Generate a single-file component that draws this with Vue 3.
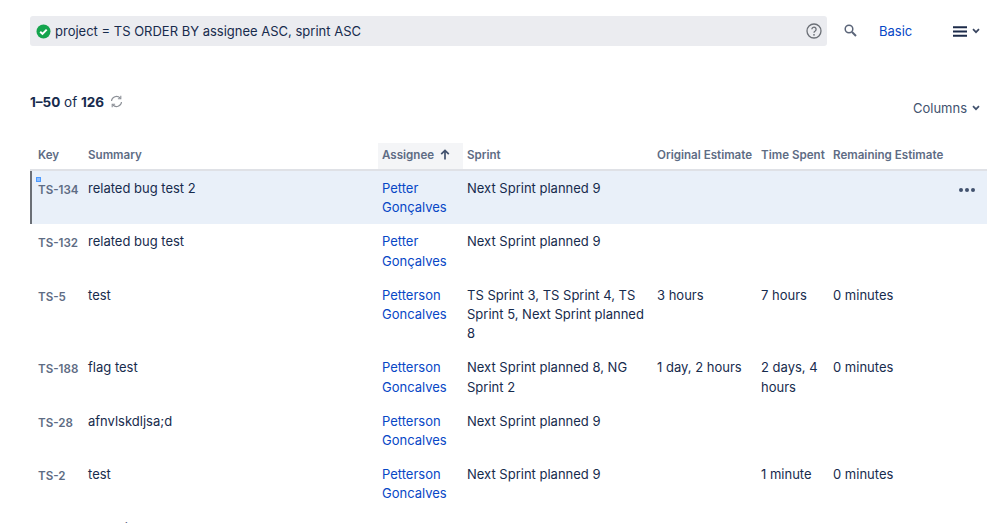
<script setup>
const rows = [
  { key: 'TS-134', summary: 'related bug test 2', assignee: 'Petter Gonçalves', sprint: 'Next Sprint planned 9', orig: '', spent: '', rem: '', active: true },
  { key: 'TS-132', summary: 'related bug test', assignee: 'Petter Gonçalves', sprint: 'Next Sprint planned 9', orig: '', spent: '', rem: '' },
  { key: 'TS-5', summary: 'test', assignee: 'Petterson Goncalves', sprint: 'TS Sprint 3, TS Sprint 4, TS Sprint 5, Next Sprint planned 8', orig: '3 hours', spent: '7 hours', rem: '0 minutes' },
  { key: 'TS-188', summary: 'flag test', assignee: 'Petterson Goncalves', sprint: 'Next Sprint planned 8, NG Sprint 2', orig: '1 day, 2 hours', spent: '2 days, 4 hours', rem: '0 minutes' },
  { key: 'TS-28', summary: 'afnvlskdljsa;d', assignee: 'Petterson Goncalves', sprint: 'Next Sprint planned 9', orig: '', spent: '', rem: '' },
  { key: 'TS-2', summary: 'test', assignee: 'Petterson Goncalves', sprint: 'Next Sprint planned 9', orig: '', spent: '1 minute', rem: '0 minutes' },
  { key: 'TS-33', summary: 'Task title some sample bug', assignee: 'Petterson Goncalves', sprint: '', orig: '', spent: '', rem: '' }
]
</script>

<template>
  <div class="page">
    <div class="search-row">
      <div class="jql">
        <svg class="ok" width="15" height="15" viewBox="0 0 15 15">
          <circle cx="7.5" cy="7.5" r="7" fill="#14a44d" />
          <path d="M4.2 7.7l2.3 2.2 4.2-4.3" fill="none" stroke="#fff" stroke-width="2" />
        </svg>
        <span class="query">project = TS ORDER BY assignee ASC, sprint ASC</span>
        <svg class="help" width="16" height="16" viewBox="0 0 16 16">
          <circle cx="8" cy="8" r="7" fill="none" stroke="#6b6f76" stroke-width="1.3" />
          <path d="M5.900 6.300a2.100 2.100 0 1 1 3.300 1.700c-.8.5-1.200.9-1.200 1.800" fill="none" stroke="#6b6f76" stroke-width="1.3" />
          <circle cx="8" cy="11.800" r=".9" fill="#6b6f76" />
        </svg>
      </div>
      <svg class="mag" width="13" height="13" viewBox="0 0 13 13">
        <circle cx="5" cy="5" r="3.800" fill="none" stroke="#5a6478" stroke-width="1.500" />
        <path d="M8 8l4 4" stroke="#5a6478" stroke-width="2" />
      </svg>
      <a class="basic">Basic</a>
      <div class="menu">
        <svg width="14" height="11" viewBox="0 0 14 11">
          <path d="M0 1.200h14M0 5.500h14M0 9.800h14" stroke="#1c2b4a" stroke-width="2" />
        </svg>
        <svg width="8" height="6" viewBox="0 0 8 6">
          <path d="M1 1.200l3 3 3-3" fill="none" stroke="#3a4660" stroke-width="1.700" />
        </svg>
      </div>
    </div>

    <div class="meta-row">
      <div class="count">
        <span><b>1–50</b> of <b>126</b></span>
        <svg class="refresh" width="13" height="13" viewBox="0 0 13 13">
          <path d="M1.500 6a5 5 0 0 1 8.600-3M11.500 7a5 5 0 0 1-8.600 3" fill="none" stroke="#8b8f96" stroke-width="1.100" />
          <path d="M10.800.8v2.900H7.900M2.200 12.200V9.300h2.900" fill="none" stroke="#8b8f96" stroke-width="1.100" />
        </svg>
      </div>
      <div class="columns">
        Columns
        <svg width="8" height="6" viewBox="0 0 8 6">
          <path d="M1 1.200l3 3 3-3" fill="none" stroke="#42526e" stroke-width="1.700" />
        </svg>
      </div>
    </div>

    <table class="issues">
      <colgroup>
        <col class="c-key" /><col class="c-sum" /><col class="c-asg" /><col class="c-spr" />
        <col class="c-ori" /><col class="c-tim" /><col class="c-rem" /><col class="c-act" />
      </colgroup>
      <thead>
        <tr>
          <th>Key</th>
          <th>Summary</th>
          <th class="sorted">
            Assignee
            <svg class="arrow" width="10" height="11" viewBox="0 0 10 11">
              <path d="M5 10.500V1.500M1.200 5.200L5 1.400l3.800 3.800" fill="none" stroke="#42526e" stroke-width="1.700" />
            </svg>
          </th>
          <th>Sprint</th>
          <th>Original Estimate</th>
          <th>Time Spent</th>
          <th>Remaining Estimate</th>
          <th></th>
        </tr>
      </thead>
      <tbody>
        <tr v-for="r in rows" :key="r.key" :class="{ active: r.active }">
          <td class="key">
            <span v-if="r.active" class="marker"></span>
            {{ r.key }}
          </td>
          <td class="text">{{ r.summary }}</td>
          <td class="link">{{ r.assignee }}</td>
          <td class="text">{{ r.sprint }}</td>
          <td class="text">{{ r.orig }}</td>
          <td class="text">{{ r.spent }}</td>
          <td class="text">{{ r.rem }}</td>
          <td class="act"><span v-if="r.active" class="dots"><i></i><i></i><i></i></span></td>
        </tr>
      </tbody>
    </table>
  </div>
</template>

<style scoped>
.page {
  width: 998px;
  height: 523px;
  overflow: hidden;
  box-sizing: border-box;
  padding: 16px 11px 0 30px;
  font-family: Inter, "Liberation Sans", sans-serif;
  font-size: 13px;
  color: #172b4d;
  background: #fff;
}
.search-row {
  display: flex;
  align-items: center;
  height: 30px;
}
.jql {
  width: 797px;
  height: 30px;
  flex: none;
  display: flex;
  align-items: center;
  box-sizing: border-box;
  padding: 0 5px 0 6px;
  background: #ebecf0;
  border-radius: 3px;
}
.query {
  margin-left: 4px;
  flex: 1;
  padding-bottom: 1px;
}
.mag { margin-left: 17px; margin-bottom: 2px; flex: none; }
.basic {
  margin-left: 22px;
  color: #0747c6;
}
.menu {
  margin-left: auto;
  margin-right: 7px;
  display: flex;
  align-items: center;
  gap: 5px;
}
.meta-row {
  display: flex;
  justify-content: space-between;
  margin-top: 48px;
  padding-right: 7px;
  height: 26px;
}
.count {
  display: flex;
  align-items: center;
  gap: 6px;
  height: 16px;
  font-size: 13.500px;
}
.count b { font-weight: 700; }
.refresh { margin-bottom: 2px; }
.columns {
  display: flex;
  align-items: center;
  gap: 5px;
  height: 16px;
  margin-top: 6px;
  color: #42526e;
}
.issues {
  width: 957px;
  table-layout: fixed;
  border-collapse: collapse;
  margin-top: 23px;
}
.c-key { width: 54px; }
.c-sum { width: 294px; }
.c-asg { width: 85px; }
.c-spr { width: 190px; }
.c-ori { width: 104px; }
.c-tim { width: 72px; }
.c-rem { width: 118px; }
.c-act { width: 40px; }
th {
  height: 27px;
  padding: 0 4px 3px;
  box-sizing: border-box;
  text-align: left;
  vertical-align: middle;
  font-size: 11.600px;
  font-weight: 600;
  color: #5e6c84;
  white-space: nowrap;
  border-bottom: 2px solid #dfe1e6;
}
th:first-child, td:first-child { padding-left: 8px; }
.sorted { background: #f4f5f7; }
.arrow { margin-left: 3px; vertical-align: -1px; }
td {
  padding: 8px 4px 7px;
  vertical-align: top;
  line-height: 19.200px;
  font-size: 13px;
}
.text { color: #172b4d; }
.link { color: #0747c6; }
.key {
  position: relative;
  font-size: 11.600px;
  font-weight: 600;
  color: #5e6c84;
  padding-top: 10px;
  white-space: nowrap;
}
.active { background: #e9f0f9; }
.active .key { box-shadow: inset 2px 0 0 #6b6f76; }
.marker {
  position: absolute;
  left: 6px;
  top: 6px;
  width: 3px;
  height: 3px;
  border: 1px solid #4c9aff;
  background: #8fbfff;
}
.act {
  text-align: right;
  padding-right: 12px;
}
.dots { display: inline-flex; gap: 2px; margin-top: 9px; vertical-align: top; }
.dots i {
  width: 4px;
  height: 4px;
  border-radius: 50%;
  background: #42526e;
}
</style>
